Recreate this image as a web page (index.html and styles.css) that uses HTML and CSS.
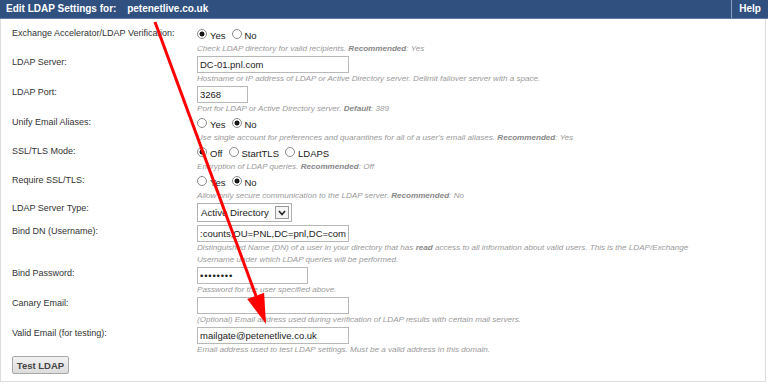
FILE: index.html
```html
<!DOCTYPE html>
<html lang="en">
<head>
    <meta charset="UTF-8">
    <meta name="viewport" content="width=device-width, initial-scale=1.0">
    <title>Edit LDAP Settings</title>
    <link rel="stylesheet" href="styles.css">
</head>
<body>
    <div class="header">
        <div class="header-title">Edit LDAP Settings for: <span class="domain">petenetlive.co.uk</span></div>
        <div class="header-help">Help</div>
    </div>

    <form class="panel" id="ldap-form">
        <div class="row">
            <div class="label">Exchange Accelerator/LDAP Verification:</div>
            <div class="field">
                <div class="control radios">
                    <label class="option"><input type="radio" name="verify" checked>Yes</label>
                    <label class="option"><input type="radio" name="verify">No</label>
                </div>
                <div class="hint">Check LDAP directory for valid recipients. <b>Recommended</b>: Yes</div>
            </div>
        </div>

        <div class="row">
            <div class="label">LDAP Server:</div>
            <div class="field">
                <div class="control"><input type="text" class="text-input wide" value="DC-01.pnl.com"></div>
                <div class="hint">Hostname or IP address of LDAP or Active Directory server. Delimit failover server with a space.</div>
            </div>
        </div>

        <div class="row">
            <div class="label">LDAP Port:</div>
            <div class="field">
                <div class="control"><input type="text" class="text-input short" value="3268"></div>
                <div class="hint">Port for LDAP or Active Directory server. <b>Default</b>: 389</div>
            </div>
        </div>

        <div class="row">
            <div class="label">Unify Email Aliases:</div>
            <div class="field">
                <div class="control radios">
                    <label class="option"><input type="radio" name="unify">Yes</label>
                    <label class="option"><input type="radio" name="unify" checked>No</label>
                </div>
                <div class="hint">Use single account for preferences and quarantines for all of a user's email aliases. <b>Recommended</b>: Yes</div>
            </div>
        </div>

        <div class="row">
            <div class="label">SSL/TLS Mode:</div>
            <div class="field">
                <div class="control radios">
                    <label class="option"><input type="radio" name="ssl" checked>Off</label>
                    <label class="option"><input type="radio" name="ssl">StartTLS</label>
                    <label class="option"><input type="radio" name="ssl">LDAPS</label>
                </div>
                <div class="hint">Encryption of LDAP queries. <b>Recommended</b>: Off</div>
            </div>
        </div>

        <div class="row">
            <div class="label">Require SSL/TLS:</div>
            <div class="field">
                <div class="control radios">
                    <label class="option"><input type="radio" name="require">Yes</label>
                    <label class="option"><input type="radio" name="require" checked>No</label>
                </div>
                <div class="hint">Allow only secure communication to the LDAP server. <b>Recommended</b>: No</div>
            </div>
        </div>

        <div class="row row-select">
            <div class="label">LDAP Server Type:</div>
            <div class="field">
                <div class="select-box">
                    <select class="select">
                        <option>Active Directory</option>
                        <option>Domino</option>
                        <option>Other</option>
                    </select>
                    <span class="select-arrow">
                        <svg width="8" height="6" viewBox="0 0 8 6"><path d="M1 1 L4 4.5 L7 1" fill="none" stroke="#222" stroke-width="1.6"/></svg>
                    </span>
                </div>
            </div>
        </div>

        <div class="row">
            <div class="label">Bind DN (Username):</div>
            <div class="field">
                <div class="control"><input type="text" class="text-input wide" value=":counts,OU=PNL,DC=pnl,DC=com"></div>
                <div class="hint">Distinguished Name (DN) of a user in your directory that has <b>read</b> access to all information about valid users. This is the LDAP/Exchange Username under which LDAP queries will be performed.</div>
            </div>
        </div>

        <div class="row">
            <div class="label">Bind Password:</div>
            <div class="field">
                <div class="control"><input type="password" class="text-input medium secret" value="password"></div>
                <div class="hint">Password for the user specified above.</div>
            </div>
        </div>

        <div class="row">
            <div class="label">Canary Email:</div>
            <div class="field">
                <div class="control"><input type="text" class="text-input wide" value=""></div>
                <div class="hint">(Optional) Email address used during verification of LDAP results with certain mail servers.</div>
            </div>
        </div>

        <div class="row">
            <div class="label">Valid Email (for testing):</div>
            <div class="field">
                <div class="control"><input type="text" class="text-input wide" value="mailgate@petenetlive.co.uk"></div>
                <div class="hint">Email address used to test LDAP settings. Must be a valid address in this domain.</div>
            </div>
        </div>

        <button type="button" class="test-button">Test LDAP</button>
    </form>

    <!-- annotation arrow drawn over the form -->
    <svg class="arrow" width="768" height="384" viewBox="0 0 768 384">
        <line x1="155" y1="22" x2="256" y2="296" stroke="#f00" stroke-width="3"/>
        <polygon points="266,324 264.1,292.7 247.2,298.9" fill="#f00"/>
    </svg>
</body>
</html>
```

FILE: styles.css
```css
body {
    margin: 0;
    font-family: "Liberation Sans", Arial, sans-serif;
    background: #fff;
}
.header {
    display: flex;
    height: 19px;
    box-sizing: border-box;
    background-color: #30507f;
    border-bottom: 1px solid #5f7aa3;
    color: #fff;
    font-weight: bold;
    font-size: 10px;
}
.header-title {
    flex: 1;
    padding-left: 6px;
    line-height: 18px;
}
.domain {
    margin-left: 8px;
}
.header-help {
    width: 36px;
    border-left: 1px solid #8da0bd;
    text-align: center;
    line-height: 18px;
}
.panel {
    width: 766px;
    box-sizing: border-box;
    margin: 0;
    border: 1px solid #dedede;
    border-top: none;
    padding: 7px 0 7px 11px;
}
.row {
    display: flex;
    padding-top: 1px;
}
.row-select {
    padding-top: 0;
    margin-bottom: 2px;
}
.label {
    width: 185px;
    flex-shrink: 0;
    font-size: 9px;
    line-height: 12px;
    color: #333;
}
.control {
    height: 17px;
    display: flex;
    align-items: center;
}
.radios {
    height: 16px;
}
.option {
    display: inline-flex;
    align-items: center;
    margin-right: 6px;
    font-size: 9.5px;
    color: #222;
}
.option input {
    appearance: none;
    width: 10px;
    height: 10px;
    box-sizing: border-box;
    margin: 0 3px 3px 0;
    border: 1px solid #8a8a8a;
    border-radius: 50%;
    background: #fff;
}
.option input:checked {
    background: radial-gradient(circle, #1a1a1a 0 2.2px, #fff 2.8px);
}
.hint {
    max-width: 500px;
    font-size: 8.1px;
    font-style: italic;
    line-height: 12px;
    color: #9a9a9a;
}
.hint b {
    color: #888;
}
.text-input {
    height: 17px;
    box-sizing: border-box;
    border: 1px solid #b8b8b8;
    padding: 0 1px 0 2px;
    margin: 0;
    font-family: "Liberation Sans", Arial, sans-serif;
    font-size: 9.5px;
    color: #222;
    background: #fff;
}
.secret {
    letter-spacing: 0.8px;
}
.wide {
    width: 152px;
}
.short {
    width: 51px;
}
.medium {
    width: 111px;
}
.select-box {
    display: inline-flex;
    align-items: center;
    width: 95px;
    height: 19px;
    box-sizing: border-box;
    border: 1px solid #b0b0b0;
    background: #fff;
}
.select {
    appearance: none;
    flex: 1;
    min-width: 0;
    border: none;
    padding: 0 0 0 3px;
    font-family: "Liberation Sans", Arial, sans-serif;
    font-size: 9.7px;
    color: #222;
    background: transparent;
}
.select-arrow {
    display: flex;
    align-items: center;
    justify-content: center;
    width: 14px;
    height: 13px;
    box-sizing: border-box;
    margin-right: 2px;
    border: 1px solid #999;
    background: #f4f4f4;
}
.test-button {
    display: block;
    width: 57px;
    height: 18px;
    padding: 0;
    border: 1px solid #a8a8a8;
    border-radius: 2px;
    background: linear-gradient(#f2f2f2, #dcdcdc);
    font-family: "Liberation Sans", Arial, sans-serif;
    font-size: 9.5px;
    font-weight: bold;
    color: #444;
}
.arrow {
    position: absolute;
    top: 0;
    left: 0;
    pointer-events: none;
}
```
